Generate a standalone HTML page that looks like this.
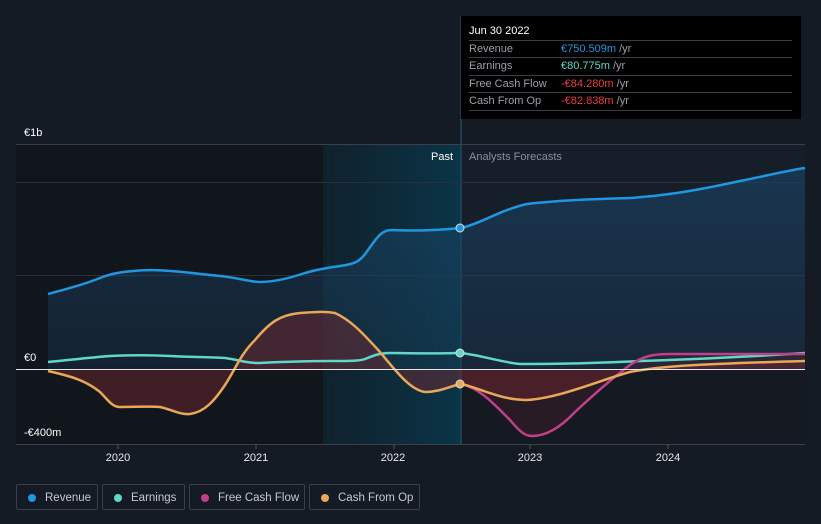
<!DOCTYPE html>
<html><head><meta charset="utf-8"><style>
html,body{margin:0;padding:0;background:#151b25;width:821px;height:524px;overflow:hidden;font-family:"Liberation Sans",sans-serif}
.tt{position:absolute;left:461px;top:16px;width:340px;height:103px;background:#000;color:#fff}
.tt .h{position:absolute;left:8px;top:9px;font-size:11px}
.tt .r{position:absolute;left:8px;width:323px;border-top:1px solid #3a3f47;font-size:11px;color:#9aa0a8;height:17px;line-height:17px}
.tt .r span.v{position:absolute;left:92px}
.lg{position:absolute;top:484px;height:26px;border:1px solid #3a404a;border-radius:2px;color:#c4c8ce;font-size:11.5px;line-height:26px;box-sizing:border-box}
.lg i{position:absolute;left:11px;top:9px;width:8px;height:8px;border-radius:50%}
.lg span{position:absolute;left:28px}
</style></head><body>
<svg width="821" height="524" style="position:absolute;left:0;top:0">
<defs>
<linearGradient id="hl" x1="0" x2="1"><stop offset="0" stop-color="#0c2733" stop-opacity=".6"/><stop offset="1" stop-color="#0a3548"/></linearGradient>
<linearGradient id="rv" x1="0" y1="0" x2="0" y2="1"><stop offset="0" stop-color="#1a4a70" stop-opacity=".55"/><stop offset="1" stop-color="#1a3a55" stop-opacity=".35"/></linearGradient>
</defs>
<rect x="16" y="144" width="307" height="300" fill="#11151c"/>
<rect x="323" y="144" width="138" height="300" fill="url(#hl)"/>
<rect x="461" y="144" width="344" height="225" fill="#161e2a"/>
<rect x="461" y="369" width="344" height="75" fill="#141922"/>
<line x1="461" y1="16" x2="461" y2="444" stroke="#1d4a5c" stroke-width="1.5"/>
<g stroke="#2a303a" stroke-width="1">
<line x1="16" y1="144.5" x2="805" y2="144.5" stroke="#3a3f48"/>
<line x1="16" y1="182.5" x2="805" y2="182.5"/>
<line x1="16" y1="275.5" x2="805" y2="275.5"/>
<line x1="16" y1="444.5" x2="805" y2="444.5" stroke="#3a3f48"/>
<line x1="118" y1="444" x2="118" y2="449" stroke="#555"/><line x1="256" y1="444" x2="256" y2="449" stroke="#555"/><line x1="394" y1="444" x2="394" y2="449" stroke="#555"/><line x1="530" y1="444" x2="530" y2="449" stroke="#555"/><line x1="668" y1="444" x2="668" y2="449" stroke="#555"/>
</g>
<path d="M48,294 C70,288 85,284 100,278 C112,273 125,271 150,270 C170,270 190,273 220,276 C240,278 250,282 260,282 C275,282 290,278 305,273 C315,270 325,268 340,266 C355,264 360,262 368,250 C378,236 382,230 392,230 C410,231 430,231 461,228 C480,224 500,210 527,204 C560,200 600,199 630,198 C660,196 690,192 740,181 C770,175 790,170 805,168 L805,369 L48,369Z" fill="url(#rv)"/>
<path d="M48,371 C70,376 85,380 100,392 C108,400 112,407 120,407 C135,407 150,406 160,407 C170,409 180,415 190,414 C205,412 215,400 225,385 C235,370 240,355 255,340 C270,322 280,315 300,313 C315,312 323,311 335,313 C350,320 360,330 380,352 C395,370 410,390 425,392 C440,392 450,386 461,384 C480,388 500,400 527,400 C560,398 600,380 630,372 C660,366 700,364 805,361 L805,369 L48,369Z" fill="#7a2a30" fill-opacity=".45"/>
<path d="M461,384 C480,388 495,405 510,420 C520,432 525,436 532,436 C545,436 560,428 575,412 C590,398 610,380 630,365 C645,355 655,354 670,354 L805,354 L805,369 L461,369Z" fill="#5a2030" fill-opacity=".3"/>
<path d="M48,294 C70,288 85,284 100,278 C112,273 125,271 150,270 C170,270 190,273 220,276 C240,278 250,282 260,282 C275,282 290,278 305,273 C315,270 325,268 340,266 C355,264 360,262 368,250 C378,236 382,230 392,230 C410,231 430,231 461,228 C480,224 500,210 527,204 C560,200 600,199 630,198 C660,196 690,192 740,181 C770,175 790,170 805,168" fill="none" stroke="#2196e0" stroke-width="2.5"/>
<path d="M48,362 C70,360 85,358 110,356 C130,355 150,355 170,356 C185,357 210,357 225,358 C240,360 245,363 258,363 C280,362 300,361 330,361 C350,361 360,361 365,359 C375,355 380,353 390,353 C410,353 430,354 461,353 C480,355 500,362 520,364 C560,364 600,363 640,361 C700,359 760,356 805,353" fill="none" stroke="#5fd8c8" stroke-width="2.5"/>
<path d="M461,384 C480,388 495,405 510,420 C520,432 525,436 532,436 C545,436 560,428 575,412 C590,398 610,380 630,365 C645,355 655,354 670,354 L805,354" fill="none" stroke="#c0408a" stroke-width="2.5"/>
<path d="M48,371 C70,376 85,380 100,392 C108,400 112,407 120,407 C135,407 150,406 160,407 C170,409 180,415 190,414 C205,412 215,400 225,385 C235,370 240,355 255,340 C270,322 280,315 300,313 C315,312 323,311 335,313 C350,320 360,330 380,352 C395,370 410,390 425,392 C440,392 450,386 461,384 C480,388 500,400 527,400 C560,398 600,380 630,372 C660,366 700,364 805,361" fill="none" stroke="#e8a857" stroke-width="2.5"/>
<line x1="16" y1="369.5" x2="805" y2="369.5" stroke="#e8e8e8" stroke-width="1"/>
<circle cx="460" cy="228" r="4" fill="#2196e0" stroke="#ddd" stroke-width="1"/>
<circle cx="460" cy="353" r="4" fill="#5fd8c8" stroke="#ddd" stroke-width="1"/>
<circle cx="460" cy="384" r="4" fill="#e8a857" stroke="#ddd" stroke-width="1"/>
<g font-family="Liberation Sans,sans-serif" font-size="11" fill="#fff">
<text x="24" y="136">€1b</text><text x="24" y="361">€0</text><text x="24" y="436">-€400m</text>
<text x="453" y="160" text-anchor="end">Past</text>
<text x="469" y="160" fill="#8a9099">Analysts Forecasts</text>
<g fill="#e8e8e8" text-anchor="middle"><text x="118" y="461">2020</text><text x="256" y="461">2021</text><text x="393" y="461">2022</text><text x="530" y="461">2023</text><text x="668" y="461">2024</text></g>
</g>
</svg>
<div class="tt">
<div class="h">Jun 30 2022</div>
<div class="r" style="top:24px">Revenue<span class="v"><b style="font-weight:normal;color:#2196e0">€750.509m</b> /yr</span></div>
<div class="r" style="top:41px">Earnings<span class="v"><b style="font-weight:normal;color:#5fd8c8">€80.775m</b> /yr</span></div>
<div class="r" style="top:59px">Free Cash Flow<span class="v"><b style="font-weight:normal;color:#e84040">-€84.280m</b> /yr</span></div>
<div class="r" style="top:76px">Cash From Op<span class="v"><b style="font-weight:normal;color:#e84040">-€82.838m</b> /yr</span></div>
<div class="r" style="top:94px;height:0"></div>
</div>
<div class="lg" style="left:16px;width:82px"><i style="background:#2196e0"></i><span>Revenue</span></div>
<div class="lg" style="left:102px;width:83px"><i style="background:#5fd8c8"></i><span>Earnings</span></div>
<div class="lg" style="left:189px;width:116px"><i style="background:#c0408a"></i><span>Free Cash Flow</span></div>
<div class="lg" style="left:309px;width:111px"><i style="background:#e8a857"></i><span>Cash From Op</span></div>
</body></html>
